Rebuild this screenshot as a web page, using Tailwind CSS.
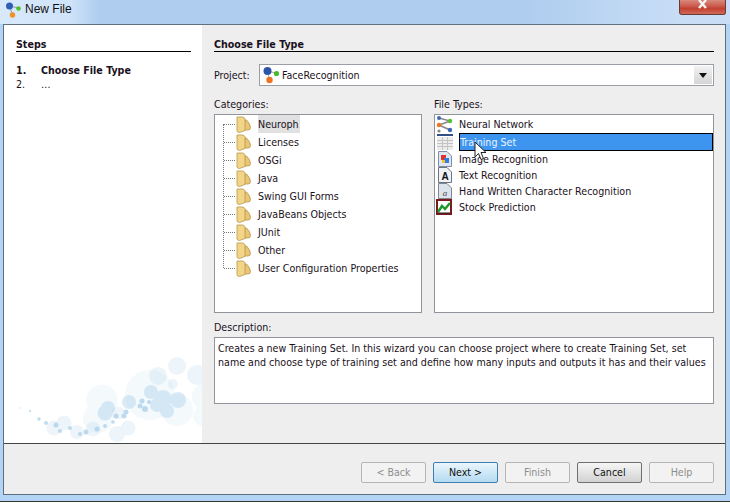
<!DOCTYPE html>
<html>
<head>
    <title>New File</title>
    <meta charset="utf-8" />
    <script src="https://cdn.jsdelivr.net/npm/@tailwindcss/browser@4"></script>
</head>
<body class="w-[730px] h-[503px] overflow-hidden bg-[#b4d4f5] font-['DejaVu_Sans_Condensed','Liberation_Sans',sans-serif] text-[10.6px] leading-none text-[#1a1020]">
    <svg class="hidden">
        <symbol id="folder" viewBox="0 0 15 17">
            <path d="M9 4 H10.5 Q14.5 8 14.5 11.5 Q14.5 14 12 14 H8 Z" fill="#e9c574" stroke="#b8974f" stroke-width=".8"/>
            <path d="M1 1 H7 L9 2.5 V14.5 L3.5 16.5 Q1 16.5 1 14.5 Z" fill="#f3d587" stroke="#b8974f" stroke-width=".8"/>
        </symbol>
    </svg>

    <!-- title bar -->
    <div class="h-6 flex items-start bg-[linear-gradient(90deg,#d8e9fb_0,#cfe3f9_70px,#aecdef_100px,#aecdef_520px,#c9def6_690px)] pl-[5px]">
        <svg class="w-[17px] h-[18px] mt-px" viewBox="0 0 17 18">
            <path d="M4 5 L14 7 M4 5 L8 14" stroke="#9a9a9a" stroke-width="1" fill="none"/>
            <circle cx="4.5" cy="5" r="3.5" fill="#2f5fb5"/>
            <circle cx="13.5" cy="7.5" r="2.3" fill="#4fc02f"/>
            <circle cx="7.5" cy="14" r="2.7" fill="#f09022"/>
        </svg>
        <span class="ml-[3px] mt-[3px] font-['Liberation_Sans',sans-serif] text-[12px] text-[#111]">New File</span>
        <div class="ml-auto mr-[4px] w-[47px] h-[15px] rounded-b-[3px] border border-t-0 border-[#6b3a38] bg-[linear-gradient(180deg,#d9897c_0,#c95a4b_45%,#c4402f_60%,#cf6a58_100%)] flex items-start justify-center">
            <svg class="w-[11px] h-[9px]" viewBox="0 0 11 9"><path d="M2 0 L9 8 M9 0 L2 8" stroke="#f4f4f4" stroke-width="2.4"/></svg>
        </div>
    </div>

    <!-- client area -->
    <div class="ml-[3px] mr-[4px] h-[471px] border border-[#5f6f80] bg-[#eeeeee] flex flex-col">
        <div class="h-[418px] flex shrink-0">
            <!-- steps panel -->
            <div class="w-[198px] shrink-0 bg-white flex flex-col">
                <div class="pl-3 pr-[11px] pt-[10px]">
                    <div class="font-bold pb-px border-b border-black h-[17px] flex items-end">Steps</div>
                    <div class="mt-[11px] flex font-bold h-[14px] items-center"><span class="w-[25px]">1.</span><span>Choose File Type</span></div>
                    <div class="flex h-[14px] items-center"><span class="w-[25px]">2.</span><span>…</span></div>
                </div>
                <svg class="mt-auto w-[198px] h-[103px]" viewBox="4 340 198 103">
                    <g fill="#a9d0ea">
                        <g opacity=".12">
                            <circle cx="102" cy="400" r="15.5"/><circle cx="150" cy="395" r="25"/><circle cx="177" cy="410" r="16"/>
                            <circle cx="98" cy="418" r="15"/><circle cx="206" cy="397" r="14"/><circle cx="203" cy="416" r="10"/>
                        </g>
                        <g opacity=".2">
                            <circle cx="177" cy="366" r="9"/><circle cx="158" cy="376" r="9"/><circle cx="197" cy="375" r="10"/>
                            <circle cx="64" cy="423" r="7.5"/><circle cx="54" cy="428" r="7.5"/><circle cx="77" cy="432" r="7"/>
                            <circle cx="93" cy="429" r="7.5"/><circle cx="117" cy="434" r="8"/><circle cx="128" cy="428" r="7.5"/>
                            <circle cx="173" cy="384" r="5"/><circle cx="118" cy="413" r="6.5"/>
                        </g>
                        <g opacity=".42">
                            <circle cx="151" cy="392" r="7"/><circle cx="163" cy="399" r="9"/><circle cx="178" cy="400" r="8"/>
                            <circle cx="167" cy="411" r="7"/><circle cx="157" cy="405" r="7"/><circle cx="129" cy="402" r="7"/>
                            <circle cx="108" cy="408" r="7"/><circle cx="105" cy="413" r="7.5"/>
                        </g>
                        <g opacity=".75">
                            <circle cx="116" cy="416" r="2.5"/><circle cx="126" cy="412" r="2.5"/><circle cx="124" cy="416" r="2.5"/>
                            <circle cx="140" cy="406" r="2.5"/><circle cx="145" cy="409" r="3"/><circle cx="142" cy="401" r="2.5"/>
                            <circle cx="149" cy="402" r="2"/><circle cx="113" cy="422" r="1.8"/><circle cx="105" cy="426" r="2"/>
                            <circle cx="97" cy="429" r="2.5"/><circle cx="86" cy="432" r="2.5"/><circle cx="80" cy="434" r="2"/>
                            <circle cx="70" cy="428" r="2"/><circle cx="60" cy="431" r="2"/><circle cx="56" cy="425" r="2.5"/>
                            <circle cx="46" cy="423" r="2"/><circle cx="39" cy="419" r="1.7"/>
                        </g>
                        <circle cx="30" cy="411" r="1.2" opacity=".6"/>
                        <circle cx="20" cy="408" r="1" opacity=".3"/>
                    </g>
                </svg>
            </div>

            <!-- main panel -->
            <div class="flex-1 min-w-0 pl-[12px] pr-[11px] pt-[10px] flex flex-col">
                <div class="font-bold pb-px border-b border-black h-[17px] flex items-end">Choose File Type</div>
                <div class="mt-[12px] flex items-center h-[22px]">
                    <span class="w-[45px]">Project:</span>
                    <div class="flex-1 h-[22px] border border-[#9a9fa5] bg-white flex items-center pl-[2px]">
                        <svg class="w-[18px] h-[18px]" viewBox="0 0 18 18">
                            <path d="M5 5 L14 7 M5 5 L8 14" stroke="#aaa" stroke-width="1" fill="none"/>
                            <circle cx="5.5" cy="5" r="4" fill="#2f55a8"/>
                            <circle cx="14.5" cy="7.5" r="2.6" fill="#48b82c"/>
                            <circle cx="7.5" cy="14" r="3.2" fill="#ee7322"/>
                        </svg>
                        <span class="ml-[2px]">FaceRecognition</span>
                        <div class="ml-auto h-[18px] w-[18px] mr-px bg-gradient-to-b from-[#f2f2f2] to-[#d4d4d4] flex items-center justify-center">
                            <svg class="w-[8px] h-[5px]" viewBox="0 0 8 5"><path d="M0 0 H8 L4 5 Z" fill="#111"/></svg>
                        </div>
                    </div>
                </div>

                <div class="mt-[13px] flex gap-[12px]">
                    <!-- categories -->
                    <div class="w-[208px]">
                        <div class="h-[13px]">Categories:</div>
                        <div class="mt-[2px] h-[199px] border border-[#8f959b] bg-white relative">
                            <div class="absolute left-[8px] top-[9px] h-[144px] border-l border-dotted border-[#777]"></div>
                            <div class="h-[18px] flex items-center"><span class="ml-[9px] w-[11px] border-t border-dotted border-[#777]"></span><svg class="w-[15px] h-[17px] ml-[1px]"><use href="#folder"/></svg><span class="ml-[7px] h-[18px] pr-px flex items-center bg-[#e1e1e1]">Neuroph</span></div>
                            <div class="h-[18px] flex items-center"><span class="ml-[9px] w-[11px] border-t border-dotted border-[#777]"></span><svg class="w-[15px] h-[17px] ml-[1px]"><use href="#folder"/></svg><span class="ml-[7px]">Licenses</span></div>
                            <div class="h-[18px] flex items-center"><span class="ml-[9px] w-[11px] border-t border-dotted border-[#777]"></span><svg class="w-[15px] h-[17px] ml-[1px]"><use href="#folder"/></svg><span class="ml-[7px]">OSGi</span></div>
                            <div class="h-[18px] flex items-center"><span class="ml-[9px] w-[11px] border-t border-dotted border-[#777]"></span><svg class="w-[15px] h-[17px] ml-[1px]"><use href="#folder"/></svg><span class="ml-[7px]">Java</span></div>
                            <div class="h-[18px] flex items-center"><span class="ml-[9px] w-[11px] border-t border-dotted border-[#777]"></span><svg class="w-[15px] h-[17px] ml-[1px]"><use href="#folder"/></svg><span class="ml-[7px]">Swing GUI Forms</span></div>
                            <div class="h-[18px] flex items-center"><span class="ml-[9px] w-[11px] border-t border-dotted border-[#777]"></span><svg class="w-[15px] h-[17px] ml-[1px]"><use href="#folder"/></svg><span class="ml-[7px]">JavaBeans Objects</span></div>
                            <div class="h-[18px] flex items-center"><span class="ml-[9px] w-[11px] border-t border-dotted border-[#777]"></span><svg class="w-[15px] h-[17px] ml-[1px]"><use href="#folder"/></svg><span class="ml-[7px]">JUnit</span></div>
                            <div class="h-[18px] flex items-center"><span class="ml-[9px] w-[11px] border-t border-dotted border-[#777]"></span><svg class="w-[15px] h-[17px] ml-[1px]"><use href="#folder"/></svg><span class="ml-[7px]">Other</span></div>
                            <div class="h-[18px] flex items-center"><span class="ml-[9px] w-[11px] border-t border-dotted border-[#777]"></span><svg class="w-[15px] h-[17px] ml-[1px]"><use href="#folder"/></svg><span class="ml-[7px]">User Configuration Properties</span></div>
                        </div>
                    </div>
                    <!-- file types -->
                    <div class="flex-1 min-w-0">
                        <div class="h-[13px]">File Types:</div>
                        <div class="mt-[2px] h-[199px] border border-[#8f959b] bg-white relative">
                            <div class="h-[18px] flex items-center pl-px">
                                <svg class="w-[17px] h-[17px]" viewBox="0 0 17 17"><path d="M3 2 L14 5 L3 9 L14 14" stroke="#888" stroke-width="1.6" fill="none"/><circle cx="3" cy="2" r="2" fill="#3d66b8"/><circle cx="14" cy="5" r="2.2" fill="#55c232"/><circle cx="3" cy="9" r="2.2" fill="#ee7322"/><circle cx="14" cy="14" r="2.2" fill="#3d66b8"/><circle cx="3" cy="15" r="1.6" fill="#888"/></svg>
                                <span class="ml-[6px]">Neural Network</span>
                            </div>
                            <div class="h-[18px] flex items-center pl-[2px]">
                                <svg class="w-4 h-[17px]" viewBox="0 0 16 17"><rect y="0" width="16" height="2" fill="#2f4f86"/><rect y="3" width="16" height="13" fill="#ececec"/><path d="M0 6.5 H16 M0 9.5 H16 M0 12.5 H16 M5.5 3 V16 M10.5 3 V16" stroke="#c4c4c4" stroke-width="1"/></svg>
                                <span class="ml-[6px] flex-1 h-[18px] flex items-center border border-black bg-[#3d95f0] text-white/90">Training Set</span>
                            </div>
                            <div class="h-4 flex items-center pl-[3px]">
                                <svg class="w-[14px] h-4" viewBox="0 0 14 16"><path d="M.5 .5 H9 L13.5 5 V15.5 H.5 Z" fill="#dfe6f2" stroke="#7f8ea8"/><rect x="3" y="4" width="5" height="5" fill="#e0362a"/><rect x="6" y="7" width="5" height="5" fill="#2f7de0"/><rect x="4" y="9" width="3" height="3" fill="#f1c232"/></svg>
                                <span class="ml-[7px]">Image Recognition</span>
                            </div>
                            <div class="h-4 flex items-center pl-[3px]">
                                <svg class="w-[14px] h-4" viewBox="0 0 14 16"><path d="M.5 .5 H9 L13.5 5 V15.5 H.5 Z" fill="#f0f2f6" stroke="#6d7480"/><text x="7" y="13" text-anchor="middle" font-size="10" font-weight="700" fill="#111" font-family="Liberation Sans">A</text></svg>
                                <span class="ml-[7px]">Text Recognition</span>
                            </div>
                            <div class="h-4 flex items-center pl-[3px]">
                                <svg class="w-[14px] h-4" viewBox="0 0 14 16"><path d="M.5 .5 H9 L13.5 5 V15.5 H.5 Z" fill="#dde3ea" stroke="#7f8794"/><text x="7" y="13" text-anchor="middle" font-size="9" font-style="italic" fill="#444" font-family="Liberation Serif">a</text></svg>
                                <span class="ml-[7px]">Hand Written Character Recognition</span>
                            </div>
                            <div class="h-4 flex items-center pl-px">
                                <svg class="w-4 h-4" viewBox="0 0 16 16"><rect x="1" y="1" width="14" height="14" fill="#fff" stroke="#7a1a1a" stroke-width="2"/><path d="M2 13 L6 7 L9 10 L14 4" stroke="#1c9a2a" stroke-width="2.4" fill="none"/><path d="M2 14 H14" stroke="#222" stroke-width="1"/></svg>
                                <span class="ml-[7px]">Stock Prediction</span>
                            </div>
                        </div>
                    </div>
                </div>

                <div class="mt-[9px] h-[13px]">Description:</div>
                <div class="mt-[2px] h-[67px] border border-[#8f959b] bg-white pl-[3px] pt-[3px] leading-[14px] whitespace-nowrap">
                    Creates a new Training Set. In this wizard you can choose project where to create Training Set, set<br>name and choose type of training set and define how many inputs and outputs it has and their values
                </div>
            </div>
        </div>

        <!-- buttons -->
        <div class="flex-1 border-t border-[#444] flex justify-end items-start gap-[7px] pt-[18px] pr-[11px]">
            <div class="w-[65px] h-[21px] rounded-[2px] border border-[#b5b5b5] flex items-center justify-center text-[#8d8d8d] bg-[#f2f2f2]">&lt; Back</div>
            <div class="w-[65px] h-[21px] rounded-[2px] border border-[#3c7fb1] flex items-center justify-center text-[#111] bg-gradient-to-b from-[#eaf6fd] to-[#b4daf1]">Next &gt;</div>
            <div class="w-[65px] h-[21px] rounded-[2px] border border-[#b5b5b5] flex items-center justify-center text-[#8d8d8d] bg-[#f2f2f2]">Finish</div>
            <div class="w-[65px] h-[21px] rounded-[2px] border border-[#707070] flex items-center justify-center text-[#111] bg-gradient-to-b from-[#f6f6f6] to-[#d2d2d2]">Cancel</div>
            <div class="w-[65px] h-[21px] rounded-[2px] border border-[#b5b5b5] flex items-center justify-center text-[#8d8d8d] bg-[#f2f2f2]">Help</div>
        </div>
    </div>
    <div class="mt-[6px] h-px bg-[#333]"></div>
    <div class="h-[2px] bg-white"></div>
    <!-- mouse pointer -->
    <svg class="absolute left-[474px] top-[141px] w-[13px] h-[20px]" viewBox="0 0 13 20"><path d="M1 1 V16 L4.5 12.5 L7 18.5 L9.5 17.5 L7 11.5 H12 Z" fill="#fff" stroke="#222" stroke-width="1"/></svg>
</body>
</html>
